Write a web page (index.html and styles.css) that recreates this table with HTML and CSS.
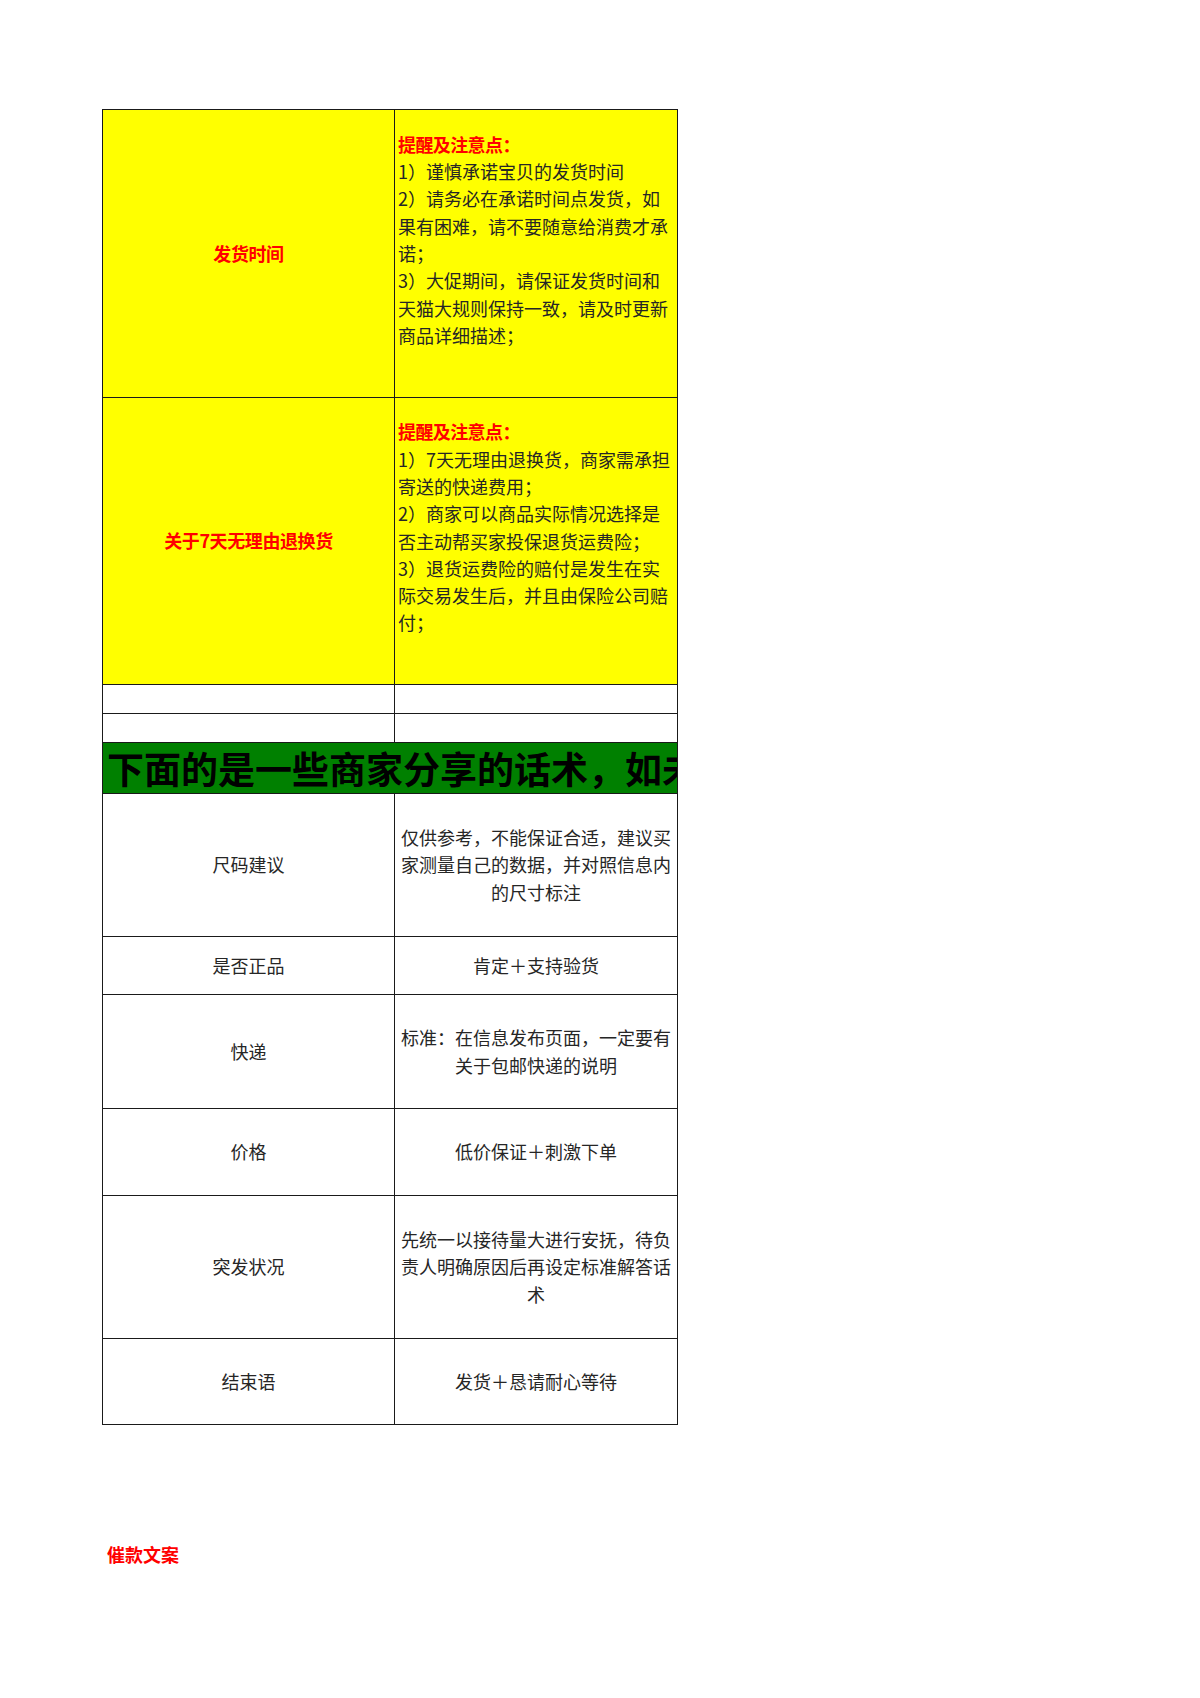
FILE: index.html
```html
<!DOCTYPE html>
<html lang="zh-CN">
<head>
<meta charset="utf-8">
<title>客服话术</title>
<link rel="stylesheet" href="styles.css">
</head>
<body>
<div class="sheet">
  <table class="grid">
    <colgroup><col class="c-left"><col class="c-right"></colgroup>
    <tr class="r-tall yellow">
      <td class="label-red">发货时间</td>
      <td class="notes"><span class="note-title">提醒及注意点：</span><br>1）谨慎承诺宝贝的发货时间<br>2）请务必在承诺时间点发货，如<br>果有困难，请不要随意给消费才承<br>诺；<br>3）大促期间，请保证发货时间和<br>天猫大规则保持一致，请及时更新<br>商品详细描述；</td>
    </tr>
    <tr class="r-tall2 yellow">
      <td class="label-red">关于7天无理由退换货</td>
      <td class="notes"><span class="note-title">提醒及注意点：</span><br>1）7天无理由退换货，商家需承担<br>寄送的快递费用；<br>2）商家可以商品实际情况选择是<br>否主动帮买家投保退货运费险；<br>3）退货运费险的赔付是发生在实<br>际交易发生后，并且由保险公司赔<br>付；</td>
    </tr>
    <tr class="r-empty"><td></td><td></td></tr>
    <tr class="r-empty"><td></td><td></td></tr>
    <tr class="r-banner">
      <td colspan="2" class="banner"><div class="banner-text">下面的是一些商家分享的话术，如未经允许请勿外传</div></td>
    </tr>
    <tr class="r-143">
      <td class="label">尺码建议</td>
      <td class="answer">仅供参考，不能保证合适，建议买<br>家测量自己的数据，并对照信息内<br>的尺寸标注</td>
    </tr>
    <tr class="r-58">
      <td class="label">是否正品</td>
      <td class="answer">肯定＋支持验货</td>
    </tr>
    <tr class="r-114">
      <td class="label">快递</td>
      <td class="answer">标准：在信息发布页面，一定要有<br>关于包邮快递的说明</td>
    </tr>
    <tr class="r-87">
      <td class="label">价格</td>
      <td class="answer">低价保证＋刺激下单</td>
    </tr>
    <tr class="r-143">
      <td class="label">突发状况</td>
      <td class="answer">先统一以接待量大进行安抚，待负<br>责人明确原因后再设定标准解答话<br>术</td>
    </tr>
    <tr class="r-86">
      <td class="label">结束语</td>
      <td class="answer">发货＋恳请耐心等待</td>
    </tr>
  </table>
  <div class="footer-title">催款文案</div>
</div>
</body>
</html>
```

FILE: styles.css
```css
html, body {
  margin: 0;
  padding: 0;
  background: #ffffff;
}

body {
  font-family: "Noto Sans CJK SC", "Noto Sans", "DejaVu Sans", sans-serif;
  color: #262626;
  font-size: 18px;
}

.sheet {
  padding: 109px 0 0 102px;
}

.grid {
  border-collapse: collapse;
  table-layout: fixed;
  width: 575px;
}

.c-left { width: 292px; }
.c-right { width: 283px; }

.grid td {
  border: 1px solid #1a1a1a;
  padding: 0;
  font-size: 18px;
  line-height: 27.3px;
  overflow: hidden;
  white-space: nowrap;
  vertical-align: middle;
}

.yellow td { background: #ffff00; }

.r-tall { height: 288px; }
.r-tall2 { height: 287px; }
.r-empty { height: 29px; }
.r-banner { height: 51px; }
.r-143 { height: 143px; }
.r-58 { height: 58px; }
.r-114 { height: 114px; }
.r-87 { height: 87px; }
.r-86 { height: 86px; }

.label-red {
  text-align: center;
  color: #ff0000;
  font-weight: 700;
  letter-spacing: -0.4px;
}

.grid td.notes {
  text-align: left;
  padding: 0 0 27px 3px;
  color: #262626;
}

.note-title {
  color: #ff0000;
  font-weight: 700;
  letter-spacing: -0.6px;
}

.grid td.banner {
  background: #008000;
  padding: 0 0 0 4px;
  vertical-align: middle;
}

.banner-text {
  font-size: 37px;
  line-height: 48px;
  font-weight: 700;
  color: #000000;
  white-space: nowrap;
  overflow: hidden;
  width: 570px;
}

.label {
  text-align: center;
  color: #262626;
}

.answer {
  text-align: center;
  color: #262626;
}

.footer-title {
  margin: 117px 0 0 5px;
  color: #ff0000;
  font-weight: 700;
  font-size: 18px;
  line-height: 24px;
}
```
